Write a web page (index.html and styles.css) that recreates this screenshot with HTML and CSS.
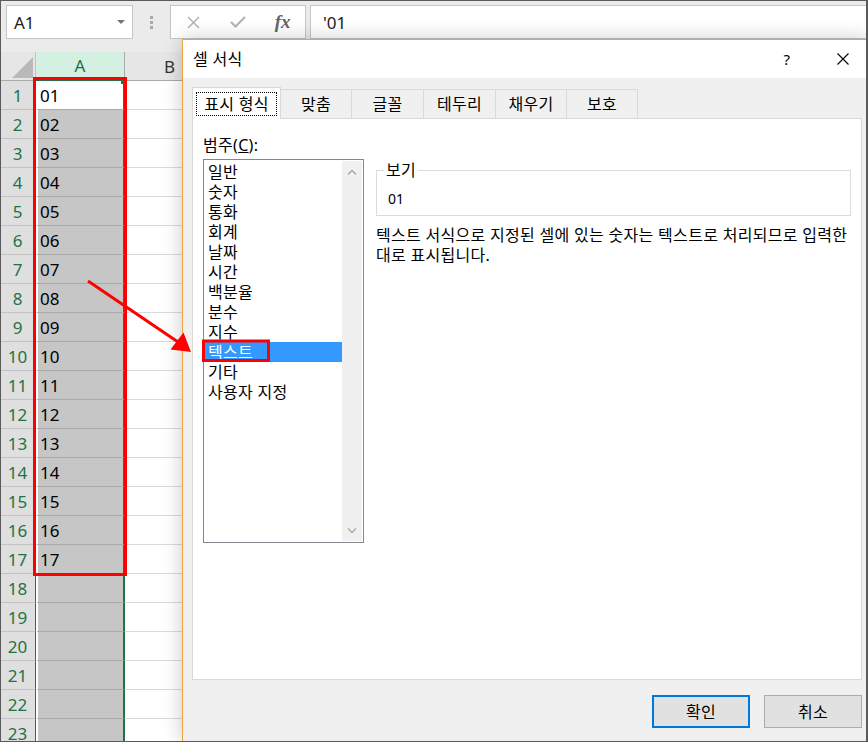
FILE: index.html
```html
<!DOCTYPE html>
<html lang="ko">
<head>
<meta charset="utf-8">
<title>셀 서식</title>
<link rel="stylesheet" href="styles.css">
</head>
<body>
<div class="app">
  <div class="topbar">
    <div class="namebox"><span class="nb-text">A1</span><span class="nb-caret"></span></div>
    <div class="grip"><i></i><i></i><i></i></div>
    <div class="fxbox">
      <span class="fxb"><svg width="13" height="13" viewBox="0 0 13 13"><path d="M1 1L12 12M12 1L1 12" stroke="#b5b5b5" stroke-width="1.6" fill="none"/></svg></span>
      <span class="fxb"><svg width="16" height="12" viewBox="0 0 16 12"><path d="M1 6L5.5 10.5L15 1" stroke="#b5b5b5" stroke-width="2.2" fill="none"/></svg></span>
      <span class="fxb fx">fx</span>
    </div>
    <div class="formula">'01</div>
  </div>

  <div class="sheet">
    <div class="row">
      <div class="corner"><span class="tri"></span></div>
      <div class="hA">A</div>
      <div class="hB">B</div>
      <div class="hRest"></div>
    </div>
    <div class="row"><div class="rh">1</div><div class="ca active">01</div><div class="cb"></div><div class="rest"></div></div>
    <div class="row"><div class="rh">2</div><div class="ca">02</div><div class="cb"></div><div class="rest"></div></div>
    <div class="row"><div class="rh">3</div><div class="ca">03</div><div class="cb"></div><div class="rest"></div></div>
    <div class="row"><div class="rh">4</div><div class="ca">04</div><div class="cb"></div><div class="rest"></div></div>
    <div class="row"><div class="rh">5</div><div class="ca">05</div><div class="cb"></div><div class="rest"></div></div>
    <div class="row"><div class="rh">6</div><div class="ca">06</div><div class="cb"></div><div class="rest"></div></div>
    <div class="row"><div class="rh">7</div><div class="ca">07</div><div class="cb"></div><div class="rest"></div></div>
    <div class="row"><div class="rh">8</div><div class="ca">08</div><div class="cb"></div><div class="rest"></div></div>
    <div class="row"><div class="rh">9</div><div class="ca">09</div><div class="cb"></div><div class="rest"></div></div>
    <div class="row"><div class="rh">10</div><div class="ca">10</div><div class="cb"></div><div class="rest"></div></div>
    <div class="row"><div class="rh">11</div><div class="ca">11</div><div class="cb"></div><div class="rest"></div></div>
    <div class="row"><div class="rh">12</div><div class="ca">12</div><div class="cb"></div><div class="rest"></div></div>
    <div class="row"><div class="rh">13</div><div class="ca">13</div><div class="cb"></div><div class="rest"></div></div>
    <div class="row"><div class="rh">14</div><div class="ca">14</div><div class="cb"></div><div class="rest"></div></div>
    <div class="row"><div class="rh">15</div><div class="ca">15</div><div class="cb"></div><div class="rest"></div></div>
    <div class="row"><div class="rh">16</div><div class="ca">16</div><div class="cb"></div><div class="rest"></div></div>
    <div class="row"><div class="rh">17</div><div class="ca">17</div><div class="cb"></div><div class="rest"></div></div>
    <div class="row"><div class="rh">18</div><div class="ca"></div><div class="cb"></div><div class="rest"></div></div>
    <div class="row"><div class="rh">19</div><div class="ca"></div><div class="cb"></div><div class="rest"></div></div>
    <div class="row"><div class="rh">20</div><div class="ca"></div><div class="cb"></div><div class="rest"></div></div>
    <div class="row"><div class="rh">21</div><div class="ca"></div><div class="cb"></div><div class="rest"></div></div>
    <div class="row"><div class="rh">22</div><div class="ca"></div><div class="cb"></div><div class="rest"></div></div>
    <div class="row"><div class="rh">23</div><div class="ca"></div><div class="cb"></div><div class="rest"></div></div>
  </div>

  <div class="dialog">
    <div class="titlebar">
      <span class="title">셀 서식</span>
      <span class="tb-btn tb-help">?</span>
      <span class="tb-btn"><svg width="12" height="12" viewBox="0 0 12 12"><path d="M0.5 0.5L11.5 11.5M11.5 0.5L0.5 11.5" stroke="#000" stroke-width="1.1" fill="none"/></svg></span>
    </div>
    <div class="dbody">
      <div class="tabs">
        <div class="tab sel"><span class="focus">표시 형식</span></div>
        <div class="tab t2">맞춤</div>
        <div class="tab t3">글꼴</div>
        <div class="tab t4">테두리</div>
        <div class="tab t5">채우기</div>
        <div class="tab t6">보호</div>
      </div>
      <div class="panel">
        <div class="leftcol">
          <div class="lbl">범주(<u>C</u>):</div>
          <div class="listbox">
            <ul class="items">
              <li>일반</li>
              <li>숫자</li>
              <li>통화</li>
              <li>회계</li>
              <li>날짜</li>
              <li>시간</li>
              <li>백분율</li>
              <li>분수</li>
              <li>지수</li>
              <li class="sel">텍스트</li>
              <li>기타</li>
              <li>사용자 지정</li>
            </ul>
            <div class="vscroll">
              <span><svg width="10" height="6" viewBox="0 0 10 6"><path d="M1 5.5L5 1.5L9 5.5" stroke="#a6a6a6" stroke-width="1.4" fill="none"/></svg></span>
              <span><svg width="10" height="6" viewBox="0 0 10 6"><path d="M1 0.5L5 4.5L9 0.5" stroke="#a6a6a6" stroke-width="1.4" fill="none"/></svg></span>
            </div>
          </div>
        </div>
        <div class="rightcol">
          <fieldset class="sample">
            <legend>보기</legend>
            <div class="sample-val">01</div>
          </fieldset>
          <p class="desc">텍스트 서식으로 지정된 셀에 있는 숫자는 텍스트로 처리되므로 입력한 대로 표시됩니다.</p>
        </div>
      </div>
      <div class="buttons">
        <button class="btn primary">확인</button>
        <button class="btn">취소</button>
      </div>
    </div>
  </div>

  <svg class="annot" width="868" height="742" viewBox="0 0 868 742">
    <rect x="34.5" y="78.5" width="91" height="496" fill="none" stroke="#ff0000" stroke-width="3"/>
    <rect x="203.5" y="341" width="65" height="19.5" fill="none" stroke="#ff0000" stroke-width="3"/>
    <line x1="88" y1="281" x2="178" y2="342" stroke="#ff0000" stroke-width="3"/>
    <polygon points="170.5,349.5 183.5,332.5 191,352" fill="#ff0000"/>
  </svg>
  <div class="frame"></div>
</div>
</body>
</html>
```

FILE: styles.css
```css
* { box-sizing: border-box; }
html, body { margin: 0; padding: 0; }
body {
  width: 868px;
  height: 742px;
  overflow: hidden;
  background: #fff;
  font-family: "Noto Sans", "Noto Sans CJK KR", sans-serif;
  color: #000;
}
.app {
  position: relative;
  width: 868px;
  height: 742px;
  overflow: hidden;
  background: #fff;
}

/* formula bar */
.topbar {
  height: 52px;
  background: #ebebeb;
  display: flex;
  align-items: flex-start;
  padding: 5px 0 0 6px;
}
.namebox {
  width: 127px;
  height: 34px;
  background: #fff;
  border: 1px solid #c6c6c6;
  display: flex;
  align-items: center;
  padding: 0 7px 0 7px;
  font-size: 17px;
  color: #222;
}
.nb-text { flex: 1; }
.nb-caret {
  width: 0; height: 0;
  border-left: 4px solid transparent;
  border-right: 4px solid transparent;
  border-top: 4px solid #767676;
}
.grip {
  width: 37px;
  height: 34px;
  display: flex;
  flex-direction: column;
  align-items: center;
  justify-content: center;
  gap: 2px;
}
.grip i { display: block; width: 3px; height: 3px; background: #a8a8a8; }
.fxbox {
  width: 136px;
  height: 34px;
  background: #fff;
  border: 1px solid #c6c6c6;
  display: flex;
  align-items: center;
}
.fxb {
  width: 45px;
  height: 32px;
  display: flex;
  align-items: center;
  justify-content: center;
}
.fx {
  font-family: "Liberation Serif", serif;
  font-style: italic;
  font-weight: bold;
  font-size: 19px;
  color: #666;
}
.formula {
  flex: 1;
  margin-left: 4px;
  height: 34px;
  background: #fff;
  border: 1px solid #c6c6c6;
  border-right: none;
  padding-left: 12px;
  display: flex;
  align-items: center;
  font-size: 17px;
  color: #222;
}

/* sheet */
.sheet { display: flex; flex-direction: column; }
.row { display: flex; height: 29px; flex: none; font-size: 17px; }
.corner {
  width: 36px;
  background: #e6e6e6;
  border-right: 1px solid #c3c3c3;
  border-bottom: 1px solid #ababab;
  display: flex;
  align-items: flex-end;
  justify-content: flex-end;
  padding: 0 2px 2px 0;
}
.tri {
  width: 0; height: 0;
  border-left: 21px solid transparent;
  border-bottom: 21px solid #b9b9b9;
}
.hA {
  width: 89px;
  background: #d3f0e0;
  color: #217346;
  border-bottom: 2px solid #217346;
  border-right: 1px solid #ababab;
  display: flex; align-items: center; justify-content: center;
}
.hB {
  width: 90px;
  background: #e6e6e6;
  color: #333;
  border-bottom: 1px solid #ababab;
  border-right: 1px solid #ababab;
  display: flex; align-items: center; justify-content: center;
}
.hRest { flex: 1; background: #e6e6e6; border-bottom: 1px solid #ababab; }
.rh {
  width: 36px;
  background: #dfdfdf;
  color: #217346;
  border-right: 1px solid #217346;
  border-bottom: 1px solid #c2c2c2;
  display: flex; align-items: center; justify-content: center;
}
.ca {
  width: 89px;
  background: #c6c6c6;
  border-left: 2px solid #fff;
  border-right: 2px solid #217346;
  border-bottom: 1px solid #a9a9a9;
  padding-left: 2px;
  display: flex; align-items: center;
}
.ca.active { background: #fff; position: relative; }
.ca.active::after {
  content: "";
  position: absolute;
  right: -2px;
  top: -1px;
  width: 4px;
  height: 4px;
  background: #217346;
}
.cb { width: 90px; border-right: 1px solid #d9d9d9; border-bottom: 1px solid #d9d9d9; }
.rest { flex: 1; border-bottom: 1px solid #d9d9d9; }

/* dialog */
.dialog {
  position: absolute;
  left: 182px;
  top: 39px;
  width: 686px;
  height: 703px;
  border: 1px solid #eaa53f;
  background: #f0f0f0;
  box-shadow: 0 0 18px rgba(0, 0, 0, 0.22);
  display: flex;
  flex-direction: column;
  font-size: 16px;
  letter-spacing: 0.3px;
  color: #000;
}
.titlebar {
  height: 38px;
  flex: none;
  background: #fff;
  display: flex;
  align-items: center;
  padding: 0 1px 0 10px;
}
.title { flex: 1; line-height: 20px; }
.tb-btn {
  width: 46px;
  height: 38px;
  display: flex;
  align-items: center;
  justify-content: center;
  font-size: 15px;
}
.tb-help { margin-right: 10px; }
.dbody {
  flex: 1;
  display: flex;
  flex-direction: column;
  padding: 9px 5px 0 9px;
}
.tabs {
  height: 31px;
  flex: none;
  display: flex;
  align-items: flex-end;
}
.tab {
  height: 29px;
  background: #f0f0f0;
  border: 1px solid #d9d9d9;
  border-left: none;
  border-bottom: none;
  display: flex;
  align-items: center;
  justify-content: center;
  line-height: 20px;
}
.tab.sel {
  width: 89px;
  height: 32px;
  margin-bottom: -1px;
  background: #fff;
  border-left: 1px solid #d9d9d9;
  position: relative;
  z-index: 1;
  padding: 4px 3px 3px;
}
.focus {
  flex: 1;
  align-self: stretch;
  border: 1px dotted #000;
  display: flex;
  align-items: center;
  justify-content: center;
}
.t2 { width: 71px; }
.t3 { width: 72px; }
.t4 { width: 72px; }
.t5 { width: 71px; }
.t6 { width: 71px; }
.panel {
  height: 562px;
  flex: none;
  background: #fff;
  border: 1px solid #d9d9d9;
  padding: 16px 10px 0;
  display: flex;
  gap: 12px;
}
.leftcol { width: 161px; flex: none; }
.lbl { line-height: 20px; }
.listbox {
  margin-top: 4px;
  height: 384px;
  border: 1px solid #828790;
  padding: 1px 1px 1px 0;
  display: flex;
  background: #fff;
}
.items {
  list-style: none;
  margin: 0;
  padding: 1px 0 0;
  flex: 1;
}
.items li {
  height: 20px;
  line-height: 20px;
  padding-left: 4px;
  white-space: nowrap;
}
.items li.sel { background: #3399ff; color: #fff; }
.vscroll {
  width: 20px;
  background: #f0f0f0;
  display: flex;
  flex-direction: column;
  justify-content: space-between;
}
.vscroll span {
  height: 21px;
  display: flex;
  align-items: center;
  justify-content: center;
}
.rightcol { width: 475px; flex: none; margin-top: 25px; }
.sample {
  margin: 0;
  padding: 9px 0 6px;
  border: 1px solid #dcdcdc;
  min-width: 0;
}
.sample legend {
  margin-left: 7px;
  padding: 0 2px;
  line-height: 20px;
}
.sample-val {
  font-size: 14px;
  line-height: 20px;
  padding-left: 11px;
  letter-spacing: 0;
}
.desc {
  margin: 9px 0 0;
  line-height: 20px;
}
.buttons {
  display: flex;
  justify-content: flex-end;
  gap: 14px;
  margin-top: 15px;
}
.btn {
  width: 98px;
  height: 33px;
  padding: 0;
  background: #e1e1e1;
  border: 1px solid #adadad;
  font-family: "Noto Sans", "Noto Sans CJK KR", sans-serif;
  font-size: 16px;
  letter-spacing: 0.3px;
  line-height: 1;
  color: #000;
}
.btn.primary { border: 2px solid #0078d7; }

/* overlays */
.annot {
  position: absolute;
  left: 0;
  top: 0;
  pointer-events: none;
}
.frame {
  position: absolute;
  inset: 0;
  border: 1px solid #5a5a5a;
  border-right-width: 2px;
  pointer-events: none;
}
```
